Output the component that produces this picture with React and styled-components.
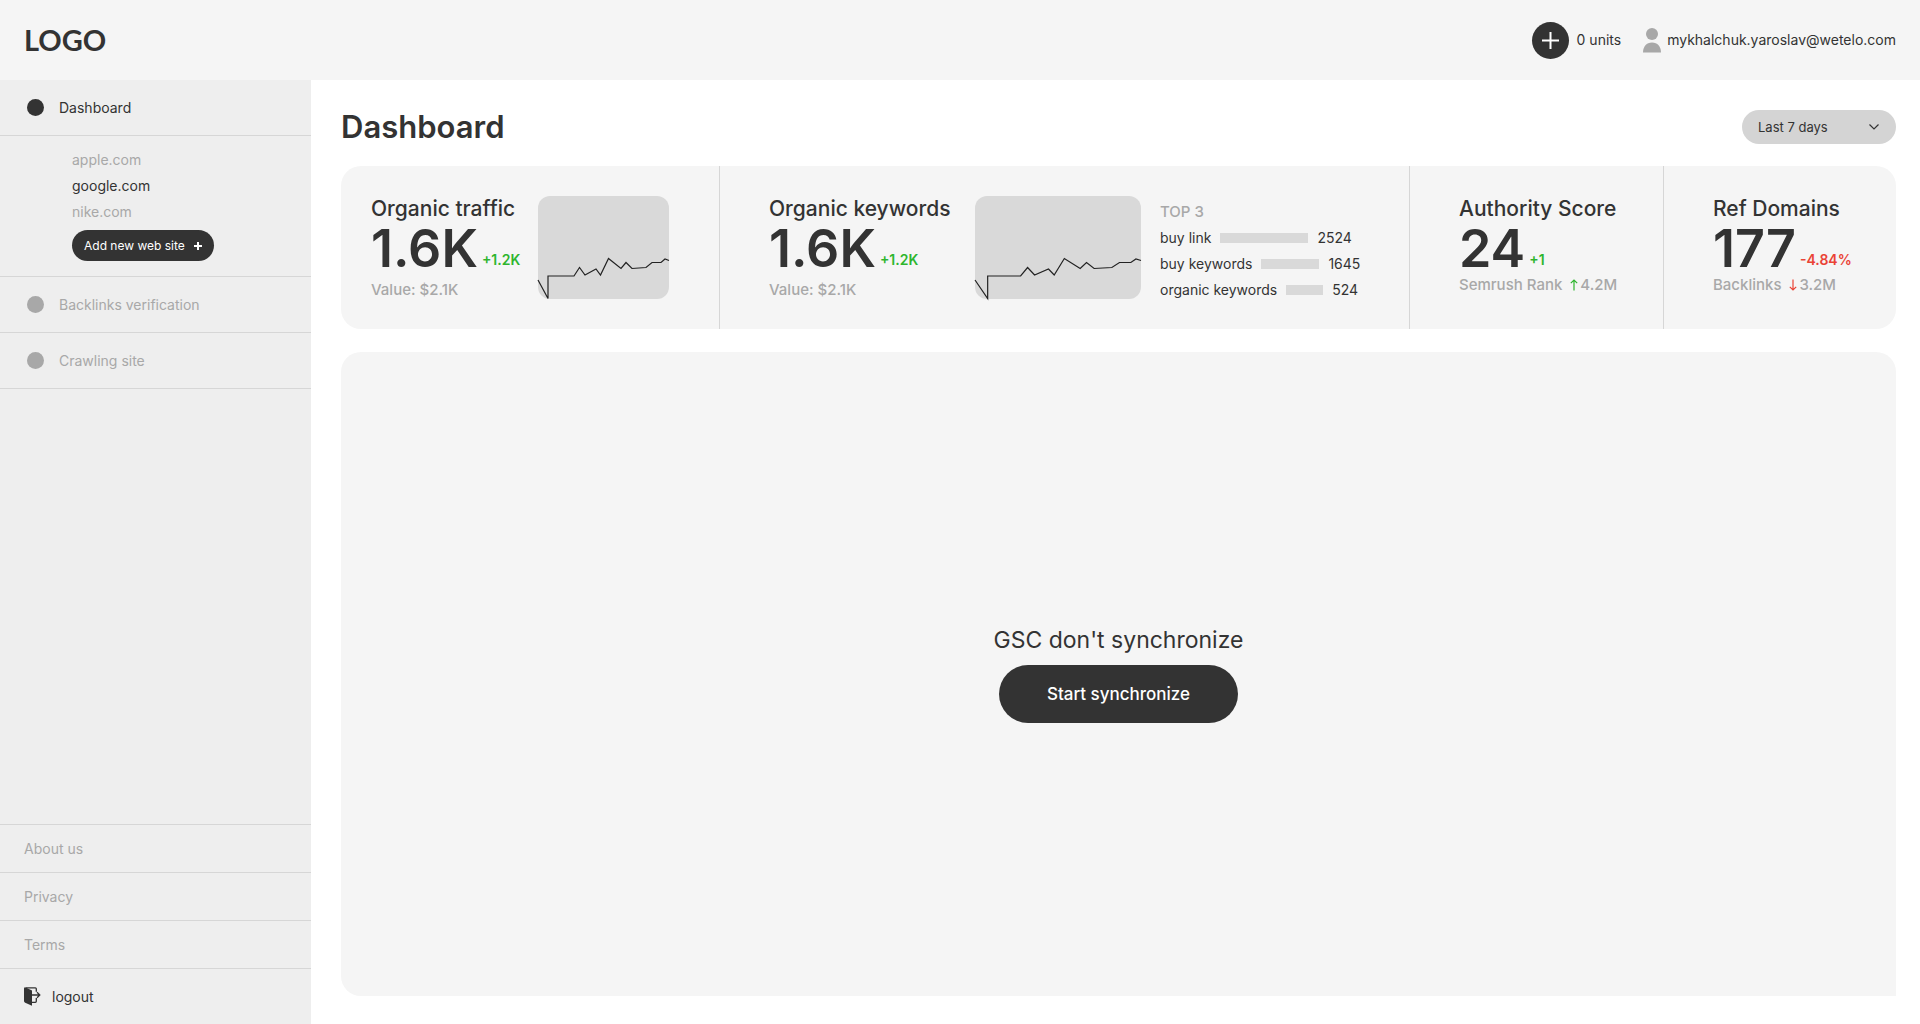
import React, { useState } from "react";
import styled, { createGlobalStyle } from "styled-components";

const GlobalStyle = createGlobalStyle`
  * {
    box-sizing: border-box;
  }

  body {
    margin: 0;
    background-color: #fff;
    color: #333;
    font-family: Inter, "Liberation Sans", sans-serif;
    font-size: 14px;
    line-height: 18px;
  }

  button,
  select {
    font-family: inherit;
    color: inherit;
    border: none;
    cursor: pointer;
  }

  a {
    color: inherit;
    text-decoration: none;
  }

  h1,
  h2,
  p,
  ul {
    margin: 0;
    padding: 0;
  }

  ul {
    list-style: none;
  }
`;

const Page = styled.div`
  display: flex;
  flex-direction: column;
  min-height: 100vh;
`;

const Header = styled.header`
  display: flex;
  align-items: center;
  justify-content: space-between;
  height: 80px;
  padding: 0 24px;
  background-color: #f5f5f5;
`;

const Logo = styled.a`
  font-family: Lato, sans-serif;
  font-size: 29px;
  font-weight: 700;
  line-height: 32px;
`;

const HeaderRight = styled.div`
  display: flex;
  align-items: center;
  gap: 22px;
`;

const HeaderItem = styled.div`
  display: flex;
  align-items: center;
  gap: ${(props) => props.$gap};
`;

const PlusButton = styled.button`
  display: flex;
  align-items: center;
  justify-content: center;
  width: 37px;
  height: 37px;
  padding: 0;
  border-radius: 50%;
  background-color: #333;
  color: #fff;
`;

const Body = styled.div`
  display: flex;
  flex: 1;
`;

const Sidebar = styled.aside`
  display: flex;
  flex-direction: column;
  justify-content: space-between;
  flex-shrink: 0;
  width: 311px;
  background-color: #eee;
`;

const NavItem = styled.li`
  border-bottom: 1px solid #d6d6d6;
`;

const NavLink = styled.a`
  display: flex;
  align-items: center;
  gap: 15px;
  height: 55px;
  padding: 0 27px;
  color: ${(props) => (props.$active ? "#333" : "#a8a8a8")};
`;

const Dot = styled.span`
  width: 17px;
  height: 17px;
  border-radius: 50%;
  background-color: currentColor;
`;

const Sites = styled.div`
  display: flex;
  flex-direction: column;
  align-items: flex-start;
  gap: 8px;
  padding: 15px 72px;
`;

const SiteLink = styled.a`
  color: ${(props) => (props.$active ? "#333" : "#a8a8a8")};
`;

const AddSiteButton = styled.button`
  display: flex;
  align-items: center;
  justify-content: space-between;
  width: 142px;
  height: 31px;
  margin-top: 1px;
  padding: 0 12px;
  border-radius: 16px;
  background-color: #333;
  color: #fff;
  font-size: 12px;
`;

const FooterItem = styled.li`
  border-top: 1px solid #d6d6d6;
`;

const FooterLink = styled.a`
  display: flex;
  align-items: center;
  height: 47px;
  padding: 0 24px;
  color: #a8a8a8;
`;

const LogoutButton = styled.button`
  display: flex;
  align-items: center;
  gap: 11px;
  width: 100%;
  height: 55px;
  padding: 0 24px;
  background: none;
  font-size: 14px;
`;

const Main = styled.main`
  display: flex;
  flex-direction: column;
  flex: 1;
  min-width: 0;
  padding: 30px 24px 28px 30px;
`;

const TitleRow = styled.div`
  display: flex;
  align-items: center;
  justify-content: space-between;
  height: 34px;
  margin-bottom: 22px;
`;

const Title = styled.h1`
  font-size: 31px;
  font-weight: 600;
  line-height: 36px;
`;

const Period = styled.label`
  display: grid;
  align-items: center;
  width: 154px;
  height: 34px;
  border-radius: 17px;
  background-color: #d4d4d4;

  > * {
    grid-area: 1 / 1;
  }

  svg {
    justify-self: end;
    margin-right: 17px;
    pointer-events: none;
  }
`;

const PeriodSelect = styled.select`
  appearance: none;
  width: 100%;
  height: 100%;
  padding: 0 16px;
  border-radius: 17px;
  background: none;
  font-size: 13px;
`;

const Stats = styled.section`
  display: grid;
  grid-template-columns: 379fr 690fr 254fr 232fr;
  margin-bottom: 23px;
  border-radius: 20px;
  background-color: #f5f5f5;
`;

const Card = styled.div`
  display: flex;
  gap: 19px;
  min-height: 163px;
  padding: 30px 24px 30px ${(props) => (props.$first ? "30px" : "49px")};
  border-right: ${(props) => (props.$last ? "none" : "1px solid #d6d6d6")};
`;

const Metric = styled.div`
  flex-shrink: 0;
  width: ${(props) => props.$width || "auto"};
`;

const MetricTitle = styled.h2`
  font-size: 21px;
  font-weight: 500;
  line-height: 26px;
  white-space: nowrap;
`;

const MetricValue = styled.p`
  display: flex;
  align-items: flex-end;
  gap: 4px;
  font-size: 52px;
  font-weight: 600;
  line-height: 54px;
`;

const Change = styled.span`
  padding-bottom: 7px;
  color: ${(props) => (props.$down ? "#ea4335" : "#2eb52e")};
  font-size: 14px;
  line-height: 18px;
`;

const MetricNote = styled.p`
  display: flex;
  align-items: center;
  margin-top: ${(props) => (props.$spaced ? "5px" : "0")};
  color: #a8a8a8;
  font-size: 15px;
  font-weight: 500;
  line-height: 18px;
  white-space: nowrap;

  svg {
    margin: 0 2px 0 8px;
  }
`;

const ChartBox = styled.div`
  flex-shrink: 0;
  width: ${(props) => props.$width};
  height: 103px;
  border-radius: 12px;
  background-color: #d9d9d9;

  svg {
    display: block;
    overflow: visible;
  }
`;

const TopList = styled.div`
  display: flex;
  flex-direction: column;
  gap: 8px;
  padding-top: 7px;
`;

const TopTitle = styled.p`
  color: #a8a8a8;
  font-size: 15px;
  font-weight: 500;
  line-height: 18px;
`;

const TopRow = styled.div`
  display: flex;
  align-items: center;
  gap: 9px;
  white-space: nowrap;
`;

const Bar = styled.span`
  height: 10px;
  background-color: #d9d9d9;
`;

const SyncPanel = styled.section`
  display: flex;
  flex-direction: column;
  align-items: center;
  justify-content: center;
  gap: 10px;
  flex: 1;
  border-radius: 20px 20px 0 20px;
  background-color: #f5f5f5;
`;

const SyncText = styled.p`
  font-size: 23px;
  line-height: 30px;
`;

const SyncButton = styled.button`
  height: 58px;
  padding: 0 48px;
  border-radius: 29px;
  background-color: #333;
  color: #fff;
  font-size: 17px;
  font-weight: 500;
`;

const sites = ["apple.com", "google.com", "nike.com"];

const keywords = [
  { name: "buy link", count: 2524, width: 88 },
  { name: "buy keywords", count: 1645, width: 58 },
  { name: "organic keywords", count: 524, width: 37 },
];

const PlusIcon = ({ size, stroke }) => (
  <svg width={size} height={size} viewBox={`0 0 ${size} ${size}`}>
    <path
      d={`M${size / 2} 0V${size}M0 ${size / 2}H${size}`}
      stroke="currentColor"
      strokeWidth={stroke}
    />
  </svg>
);

const UserIcon = () => (
  <svg width="18" height="25" viewBox="0 0 18 25" fill="#a8a8a8">
    <circle cx="9" cy="6" r="6" />
    <path d="M0 24.5C0 18.5 3.5 14.5 9 14.5S18 18.5 18 24.5Z" />
  </svg>
);

const LogoutIcon = () => (
  <svg width="17" height="19" viewBox="0 0 17 19" fill="none">
    <path d="M1.2.3L8 3.4V18.7L1.2 15.7Q0 15.2 0 14V1.5Q0 .3 1.2.3Z" fill="#333" />
    <path d="M2 .8H11.3Q12.3.8 12.3 1.8V4.8M12.3 11V14.3Q12.3 15.3 11.3 15.3H8" stroke="#333" strokeWidth="1.3" />
    <path d="M8 8H15.5M13 5.3L15.8 8L13 10.7" stroke="#333" strokeWidth="1.3" />
  </svg>
);

const Arrow = ({ down }) => (
  <svg width="8" height="12" viewBox="0 0 8 12" fill="none">
    <path
      d={down ? "M4 0.5V11M0.8 7.8L4 11L7.2 7.8" : "M4 11.5V1M0.8 4.2L4 1L7.2 4.2"}
      stroke={down ? "#ea4335" : "#2eb52e"}
      strokeWidth="1.2"
    />
  </svg>
);

const Chart = ({ width }) => (
  <ChartBox $width={`${width}px`}>
    <svg width={width} height="103" viewBox="0 0 131 103" preserveAspectRatio="none" fill="none">
      <path
        d="M0 84L10 102.5V80H36L41.5 71.5L47 79L58 73L62.5 79L70.5 62.5L83 72.5L88 66.5L94 72.5L108 71.5L114 66.5H123L127 63L131 64.5"
        stroke="#222"
        strokeWidth="1.2"
        vectorEffect="non-scaling-stroke"
      />
    </svg>
  </ChartBox>
);

export default function App() {
  const [site, setSite] = useState("google.com");
  const [period, setPeriod] = useState("7");

  return (
    <Page>
      <GlobalStyle />
      <Header>
        <Logo href="#">LOGO</Logo>
        <HeaderRight>
          <HeaderItem $gap="8px">
            <PlusButton aria-label="Add units">
              <PlusIcon size={17} stroke={2} />
            </PlusButton>
            <span>0 units</span>
          </HeaderItem>
          <HeaderItem $gap="6px">
            <UserIcon />
            <span>mykhalchuk.yaroslav@wetelo.com</span>
          </HeaderItem>
        </HeaderRight>
      </Header>

      <Body>
        <Sidebar>
          <ul>
            <NavItem>
              <NavLink href="#" $active>
                <Dot />
                Dashboard
              </NavLink>
            </NavItem>
            <NavItem>
              <Sites>
                {sites.map((name) => (
                  <SiteLink key={name} href="#" $active={name === site} onClick={() => setSite(name)}>
                    {name}
                  </SiteLink>
                ))}
                <AddSiteButton>
                  Add new web site
                  <PlusIcon size={8} stroke={2} />
                </AddSiteButton>
              </Sites>
            </NavItem>
            <NavItem>
              <NavLink href="#">
                <Dot />
                Backlinks verification
              </NavLink>
            </NavItem>
            <NavItem>
              <NavLink href="#">
                <Dot />
                Crawling site
              </NavLink>
            </NavItem>
          </ul>

          <ul>
            {["About us", "Privacy", "Terms"].map((text) => (
              <FooterItem key={text}>
                <FooterLink href="#">{text}</FooterLink>
              </FooterItem>
            ))}
            <FooterItem>
              <LogoutButton>
                <LogoutIcon />
                logout
              </LogoutButton>
            </FooterItem>
          </ul>
        </Sidebar>

        <Main>
          <TitleRow>
            <Title>Dashboard</Title>
            <Period>
              <PeriodSelect aria-label="Period" value={period} onChange={(e) => setPeriod(e.target.value)}>
                <option value="7">Last 7 days</option>
                <option value="30">Last 30 days</option>
              </PeriodSelect>
              <svg width="10" height="6" viewBox="0 0 10 6" fill="none">
                <path d="M0.5 0.5L5 5L9.5 0.5" stroke="#333" strokeWidth="1.2" />
              </svg>
            </Period>
          </TitleRow>

          <Stats>
            <Card $first>
              <Metric $width="148px">
                <MetricTitle>Organic traffic</MetricTitle>
                <MetricValue>
                  1.6K <Change>+1.2K</Change>
                </MetricValue>
                <MetricNote $spaced>Value: $2.1K</MetricNote>
              </Metric>
              <Chart width={131} />
            </Card>
            <Card>
              <Metric $width="187px">
                <MetricTitle>Organic keywords</MetricTitle>
                <MetricValue>
                  1.6K <Change>+1.2K</Change>
                </MetricValue>
                <MetricNote $spaced>Value: $2.1K</MetricNote>
              </Metric>
              <Chart width={166} />
              <TopList>
                <TopTitle>TOP 3</TopTitle>
                {keywords.map((item) => (
                  <TopRow key={item.name}>
                    {item.name}
                    <Bar style={{ width: item.width }} />
                    {item.count}
                  </TopRow>
                ))}
              </TopList>
            </Card>
            <Card>
              <Metric>
                <MetricTitle>Authority Score</MetricTitle>
                <MetricValue>
                  24 <Change>+1</Change>
                </MetricValue>
                <MetricNote>
                  Semrush Rank <Arrow />
                  4.2M
                </MetricNote>
              </Metric>
            </Card>
            <Card $last>
              <Metric>
                <MetricTitle>Ref Domains</MetricTitle>
                <MetricValue>
                  177 <Change $down>-4.84%</Change>
                </MetricValue>
                <MetricNote>
                  Backlinks <Arrow down />
                  3.2M
                </MetricNote>
              </Metric>
            </Card>
          </Stats>

          <SyncPanel>
            <SyncText>GSC don't synchronize</SyncText>
            <SyncButton>Start synchronize</SyncButton>
          </SyncPanel>
        </Main>
      </Body>
    </Page>
  );
}
